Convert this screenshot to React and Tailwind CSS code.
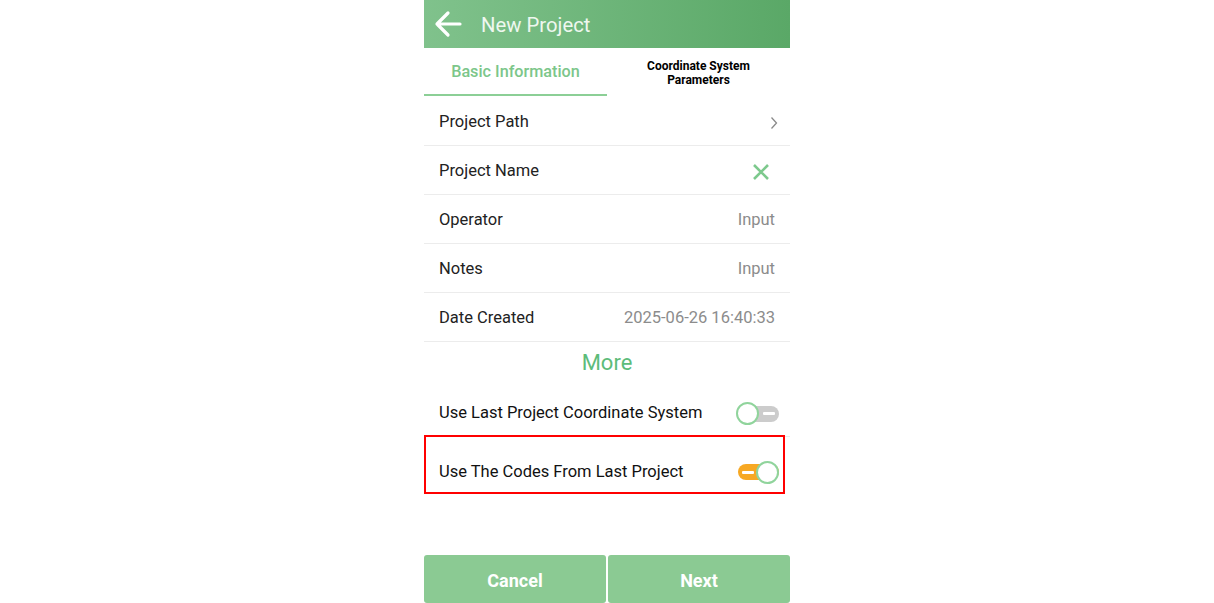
import React from "react";

function Toggle({ on }) {
  return (
    <div className="relative w-[43px] h-[23px] flex items-center">
      <div
        className={
          "absolute left-[2px] right-0 h-[16px] rounded-full " +
          (on ? "bg-[#f7a823]" : "bg-[#cccccc]")
        }
      />
      <div
        className={
          "absolute top-[10px] h-[3px] w-[12px] bg-white rounded-[1px] " +
          (on ? "left-[6px]" : "right-[4px]")
        }
      />
      <div
        className={
          "absolute top-0 w-[23px] h-[23px] rounded-full bg-white border-[2px] border-[#90d49c] " +
          (on ? "right-0" : "left-0")
        }
      />
    </div>
  );
}

function Row({ label, right }) {
  return (
    <div className="h-[49px] flex items-center justify-between px-[15px] pt-[3px] border-b border-[#ececec]">
      <span className="text-[16.5px] text-[#222222]">{label}</span>
      {right}
    </div>
  );
}

export default function App() {
  return (
    <div
      className="w-[1214px] h-[603px] bg-white flex justify-center overflow-hidden"
      style={{ fontFamily: "Roboto, 'Noto Sans', sans-serif" }}
    >
      <div className="w-[366px] h-[603px] flex flex-col">
        {/* Header */}
        <div className="h-[48px] flex items-center bg-gradient-to-r from-[#80c28c] to-[#5aa867] pl-[9px]">
          <svg width="30" height="30" viewBox="0 0 30 30" fill="none">
            <path
              d="M27 15H4M15 4L4 15L15 26"
              stroke="white"
              strokeWidth="3.2"
              strokeLinecap="round"
              strokeLinejoin="round"
            />
          </svg>
          <span className="ml-[18px] pt-[2px] text-[20.3px] text-[#eef7ef]">New Project</span>
        </div>

        {/* Tabs */}
        <div className="h-[49px] flex">
          <div className="w-[183px] flex flex-col">
            <div className="flex-1 flex items-center justify-center pt-[3px] text-[16.2px] font-medium text-[#7cc68a]">
              Basic Information
            </div>
            <div className="h-[2px] bg-[#8ccf96] mb-[1px]" />
          </div>
          <div className="flex-1 flex items-center justify-center text-center text-[12px] font-bold leading-[14px] text-black">
            Coordinate System
            <br />
            Parameters
          </div>
        </div>

        {/* Rows */}
        <Row
          label="Project Path"
          right={
            <svg width="8" height="14" viewBox="0 0 8 14" fill="none" className="mr-[-3px]">
              <path d="M1.5 1.5L6.5 7L1.5 12.5" stroke="#8a8a8a" strokeWidth="1.3" />
            </svg>
          }
        />
        <Row
          label="Project Name"
          right={
            <svg width="18" height="18" viewBox="0 0 18 18" fill="none" className="mr-[5px]">
              <path d="M2 2L16 16M16 2L2 16" stroke="#7dc98d" strokeWidth="2.6" />
            </svg>
          }
        />
        <Row label="Operator" right={<span className="text-[16.5px] text-[#8c8c8c]">Input</span>} />
        <Row label="Notes" right={<span className="text-[16.5px] text-[#8c8c8c]">Input</span>} />
        <Row
          label="Date Created"
          right={<span className="text-[16.5px] text-[#8c8c8c]">2025-06-26 16:40:33</span>}
        />

        {/* More */}
        <div className="h-[46px] flex items-center justify-center pb-[5px] text-[22px] text-[#5dbc7a]">
          More
        </div>

        {/* Toggle row 1 */}
        <div className="h-[49px] flex items-center justify-between pl-[15px] pr-[11px] pt-[3px] border-b border-[#ececec]">
          <span className="text-[16.5px] text-[#111111]">Use Last Project Coordinate System</span>
          <Toggle on={false} />
        </div>

        {/* Toggle row 2 */}
        <div className="relative h-[67px] flex items-center justify-between pl-[15px] pr-[11px] pt-[3px]">
          <span className="text-[16.5px] text-[#111111]">Use The Codes From Last Project</span>
          <Toggle on={true} />
          <div className="absolute left-0 top-[-2px] w-[361px] h-[59px] border-[2px] border-[#ff0000] pointer-events-none" />
        </div>

        {/* Buttons */}
        <div className="mt-auto h-[48px] flex gap-[2px]">
          <div className="flex-1 rounded-[3px] bg-[#8bca93] flex items-center justify-center pt-[2px] text-[18px] font-bold text-white">
            Cancel
          </div>
          <div className="flex-1 rounded-[3px] bg-[#8bca93] flex items-center justify-center pt-[2px] text-[18px] font-bold text-white">
            Next
          </div>
        </div>
      </div>
    </div>
  );
}
